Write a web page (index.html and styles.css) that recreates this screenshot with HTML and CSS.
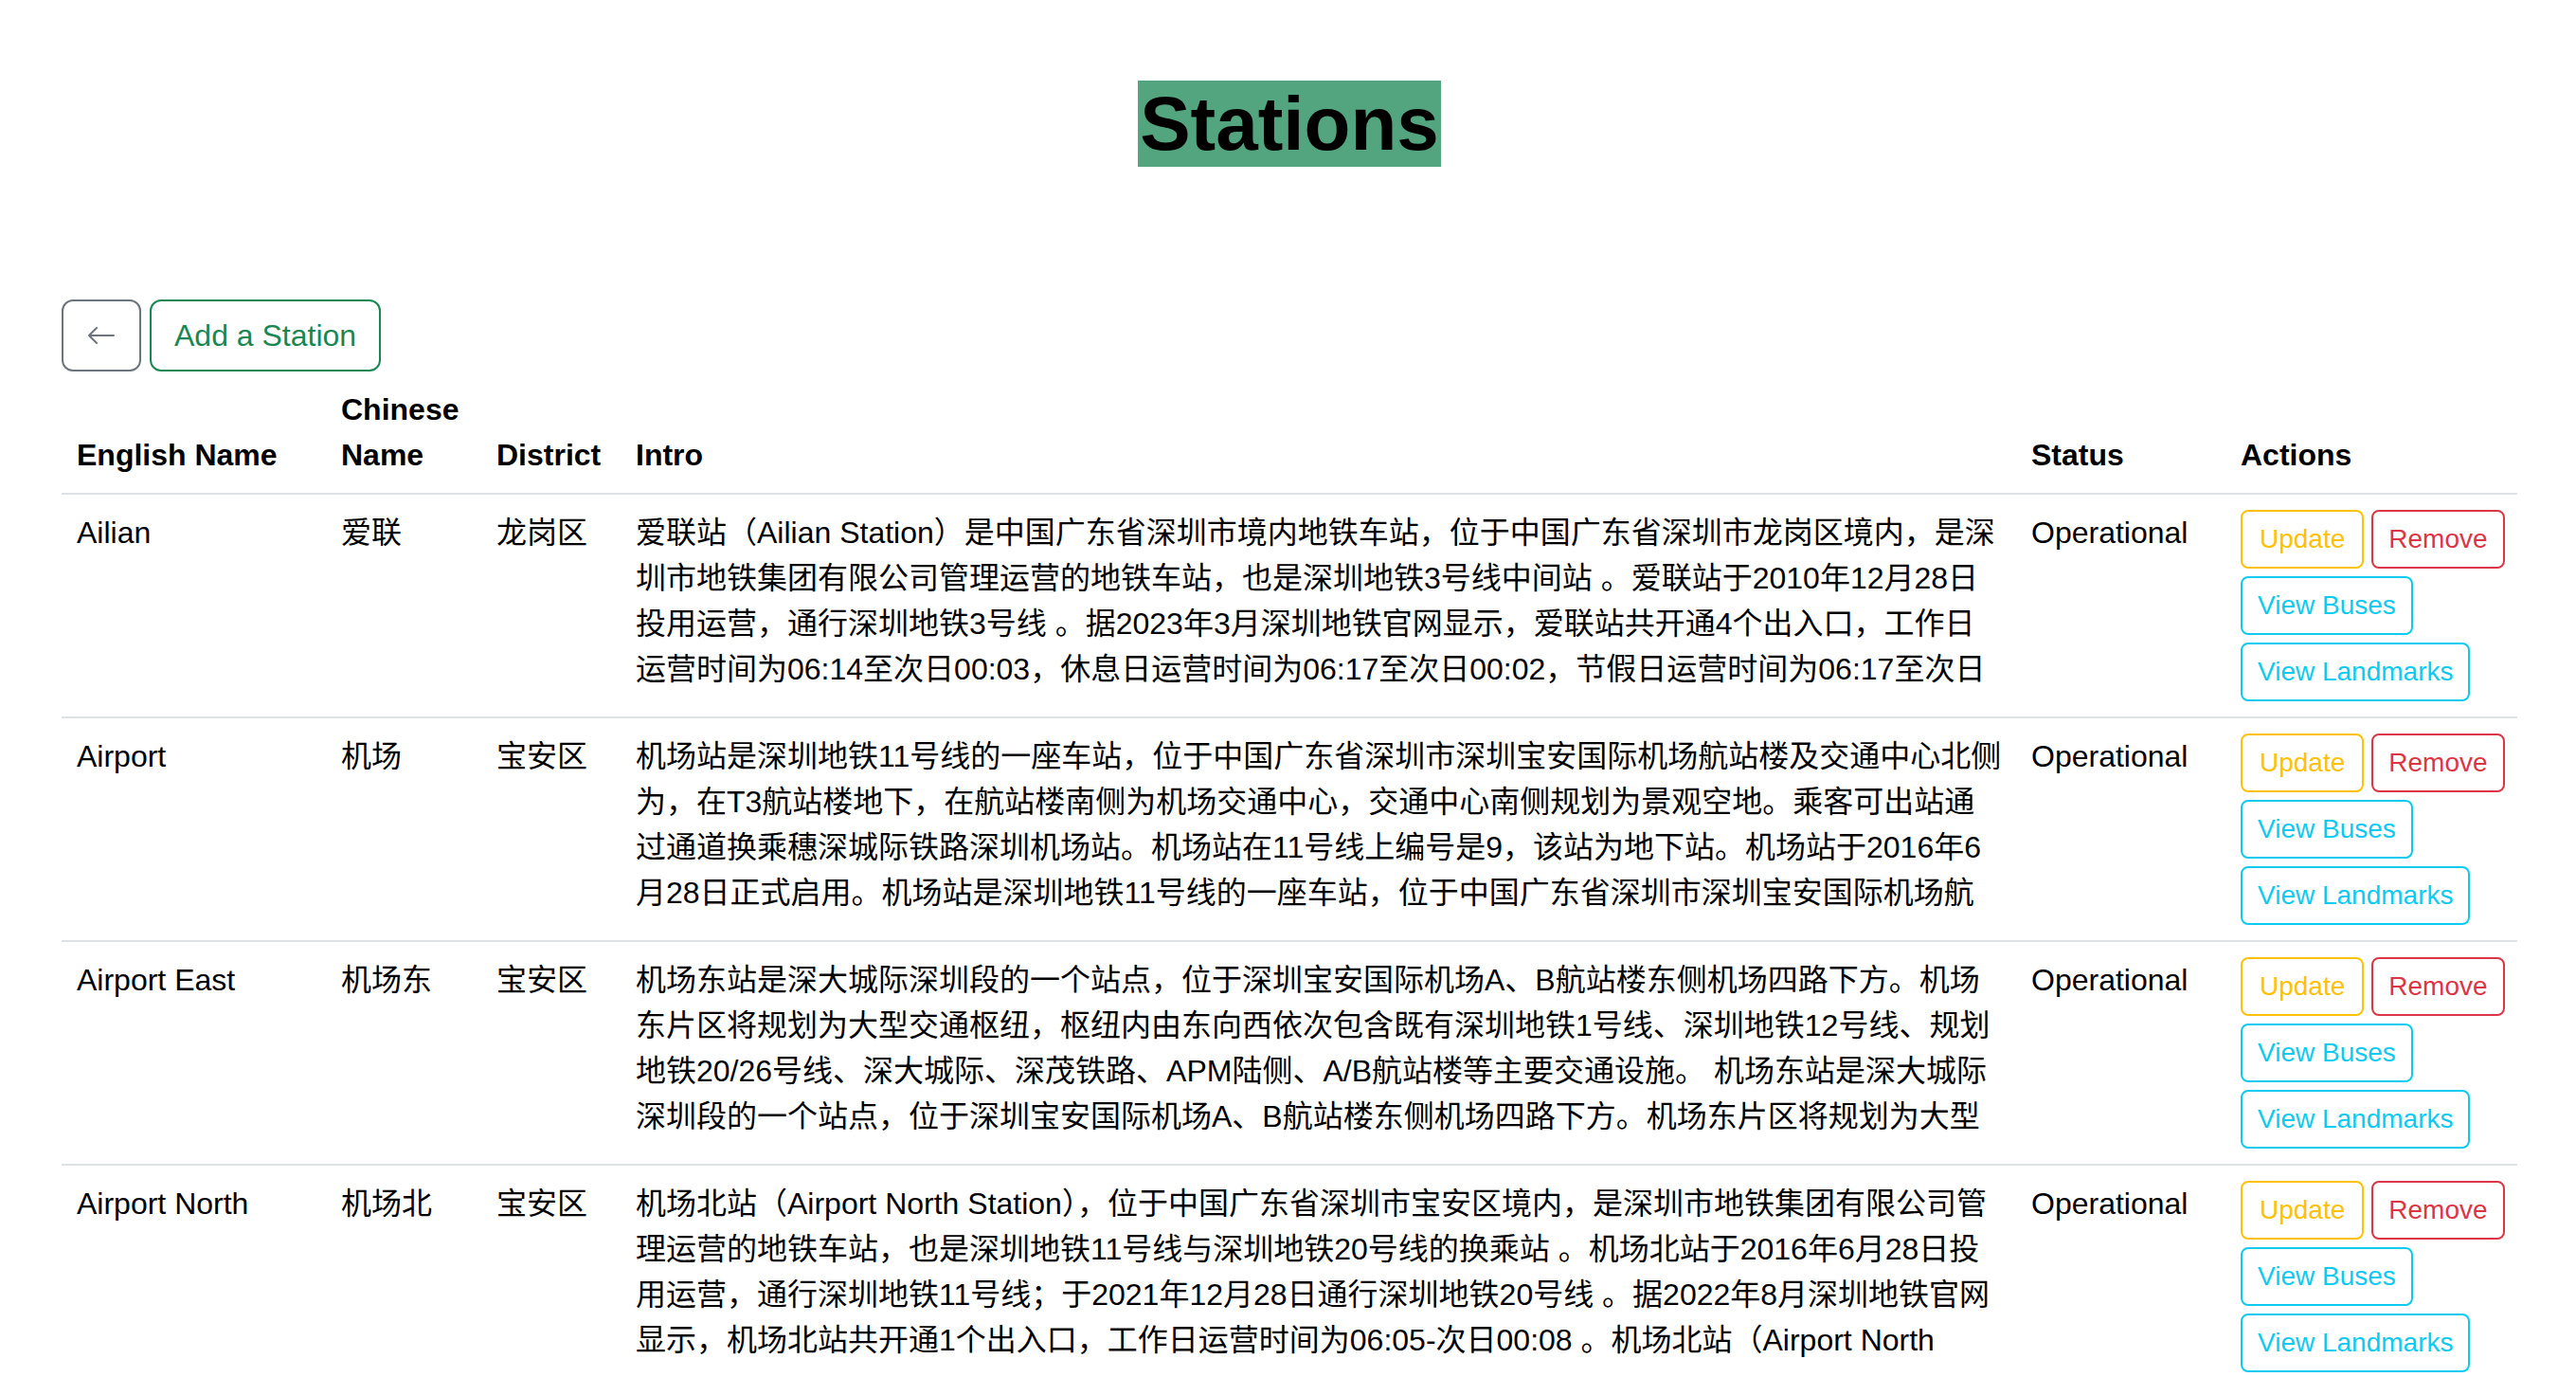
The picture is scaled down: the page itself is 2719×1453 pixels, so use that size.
FILE: index.html
```html
<!DOCTYPE html>
<html lang="en">
<head>
<meta charset="utf-8">
<title>Stations</title>
<link rel="stylesheet" href="styles.css">
</head>
<body>
<div class="page">
  <header class="page-head">
    <h1 class="title">Stations</h1>
  </header>

  <div class="toolbar">
    <a class="btn btn-back" href="#" aria-label="Back">
      <svg class="icon" viewBox="0 0 16 16" width="32" height="32" fill="currentColor" aria-hidden="true"><path fill-rule="evenodd" d="M15 8a.5.5 0 0 0-.5-.5H2.707l3.147-3.146a.5.5 0 1 0-.708-.708l-4 4a.5.5 0 0 0 0 .708l4 4a.5.5 0 0 0 .708-.708L2.707 8.5H14.5A.5.5 0 0 0 15 8z"/></svg>
    </a>
    <a class="btn btn-add" href="#">Add a Station</a>
  </div>

  <table class="stations">
    <colgroup>
      <col class="c-en"><col class="c-cn"><col class="c-dist"><col class="c-intro"><col class="c-status"><col class="c-actions">
    </colgroup>
    <thead>
      <tr>
        <th>English Name</th>
        <th>Chinese Name</th>
        <th>District</th>
        <th>Intro</th>
        <th>Status</th>
        <th>Actions</th>
      </tr>
    </thead>
    <tbody>
      <tr>
        <td>Ailian</td>
        <td>爱联</td>
        <td>龙岗区</td>
        <td><div class="intro">爱联站（Ailian Station）是中国广东省深圳市境内地铁车站，位于中国广东省深圳市龙岗区境内，是深<br>圳市地铁集团有限公司管理运营的地铁车站，也是深圳地铁3号线中间站 。爱联站于2010年12月28日<br>投用运营，通行深圳地铁3号线 。据2023年3月深圳地铁官网显示，爱联站共开通4个出入口，工作日<br>运营时间为06:14至次日00:03，休息日运营时间为06:17至次日00:02，节假日运营时间为06:17至次日</div></td>
        <td>Operational</td>
        <td>
          <div class="actions">
            <div class="pair"><a class="btn btn-sm btn-warn" href="#">Update</a><a class="btn btn-sm btn-danger" href="#">Remove</a></div>
            <a class="btn btn-sm btn-info" href="#">View Buses</a>
            <a class="btn btn-sm btn-info" href="#">View Landmarks</a>
          </div>
        </td>
      </tr>
      <tr>
        <td>Airport</td>
        <td>机场</td>
        <td>宝安区</td>
        <td><div class="intro">机场站是深圳地铁11号线的一座车站，位于中国广东省深圳市深圳宝安国际机场航站楼及交通中心北侧<br>为，在T3航站楼地下，在航站楼南侧为机场交通中心，交通中心南侧规划为景观空地。乘客可出站通<br>过通道换乘穗深城际铁路深圳机场站。机场站在11号线上编号是9，该站为地下站。机场站于2016年6<br>月28日正式启用。机场站是深圳地铁11号线的一座车站，位于中国广东省深圳市深圳宝安国际机场航</div></td>
        <td>Operational</td>
        <td>
          <div class="actions">
            <div class="pair"><a class="btn btn-sm btn-warn" href="#">Update</a><a class="btn btn-sm btn-danger" href="#">Remove</a></div>
            <a class="btn btn-sm btn-info" href="#">View Buses</a>
            <a class="btn btn-sm btn-info" href="#">View Landmarks</a>
          </div>
        </td>
      </tr>
      <tr>
        <td>Airport East</td>
        <td>机场东</td>
        <td>宝安区</td>
        <td><div class="intro">机场东站是深大城际深圳段的一个站点，位于深圳宝安国际机场A、B航站楼东侧机场四路下方。机场<br>东片区将规划为大型交通枢纽，枢纽内由东向西依次包含既有深圳地铁1号线、深圳地铁12号线、规划<br>地铁20/26号线、深大城际、深茂铁路、APM陆侧、A/B航站楼等主要交通设施。 机场东站是深大城际<br>深圳段的一个站点，位于深圳宝安国际机场A、B航站楼东侧机场四路下方。机场东片区将规划为大型</div></td>
        <td>Operational</td>
        <td>
          <div class="actions">
            <div class="pair"><a class="btn btn-sm btn-warn" href="#">Update</a><a class="btn btn-sm btn-danger" href="#">Remove</a></div>
            <a class="btn btn-sm btn-info" href="#">View Buses</a>
            <a class="btn btn-sm btn-info" href="#">View Landmarks</a>
          </div>
        </td>
      </tr>
      <tr>
        <td>Airport North</td>
        <td>机场北</td>
        <td>宝安区</td>
        <td><div class="intro">机场北站（Airport North Station），位于中国广东省深圳市宝安区境内，是深圳市地铁集团有限公司管<br>理运营的地铁车站，也是深圳地铁11号线与深圳地铁20号线的换乘站 。机场北站于2016年6月28日投<br>用运营，通行深圳地铁11号线；于2021年12月28日通行深圳地铁20号线 。据2022年8月深圳地铁官网<br>显示，机场北站共开通1个出入口，工作日运营时间为06:05-次日00:08 。机场北站（Airport North</div></td>
        <td>Operational</td>
        <td>
          <div class="actions">
            <div class="pair"><a class="btn btn-sm btn-warn" href="#">Update</a><a class="btn btn-sm btn-danger" href="#">Remove</a></div>
            <a class="btn btn-sm btn-info" href="#">View Buses</a>
            <a class="btn btn-sm btn-info" href="#">View Landmarks</a>
          </div>
        </td>
      </tr>
    </tbody>
  </table>
</div>
</body>
</html>
```

FILE: styles.css
```css
html, body {
  margin: 0;
  padding: 0;
  background: #ffffff;
}

body {
  font-family: "Liberation Sans", "Noto Sans CJK SC", Arial, sans-serif;
  font-size: 32px;
  line-height: 1.5;
  color: #212529;
}

.page {
  padding: 0 62px 0 65px;
}

.page-head {
  text-align: center;
  padding-top: 85px;
}

.title {
  display: inline-block;
  margin: 0;
  padding: 0 2px;
  font-family: "Liberation Sans", Arial, sans-serif;
  font-size: 80px;
  font-weight: 700;
  line-height: 91px;
  color: #000;
  background: rgba(25, 135, 84, 0.75);
  vertical-align: top;
}

.toolbar {
  display: flex;
  gap: 9px;
  margin-top: 140px;
}

.btn {
  display: inline-flex;
  align-items: center;
  justify-content: center;
  box-sizing: border-box;
  border: 2px solid currentColor;
  border-radius: 12px;
  padding: 12px 24px;
  font-size: 32px;
  line-height: 48px;
  text-decoration: none;
  background: #fff;
  white-space: nowrap;
}

.btn-back {
  color: #6c757d;
  border-color: #6c757d;
}

.btn-back .icon {
  display: block;
  width: 32px;
  height: 32px;
  margin: 8px 0;
}

.btn-add {
  color: #198754;
  border-color: #198754;
}

.stations {
  width: 100%;
  border-collapse: collapse;
  table-layout: fixed;
}

.c-en { width: 279px; }
.c-cn { width: 164px; }
.c-dist { width: 147px; }
.c-intro { width: 1473px; }
.c-status { width: 221px; }
.c-actions { width: 308px; }

.stations th,
.stations td {
  padding: 16px;
  text-align: left;
  border-bottom: 2px solid #dee2e6;
}

.stations thead th {
  vertical-align: bottom;
  font-weight: 700;
  color: #000;
}

.stations tbody td {
  vertical-align: top;
  color: #000;
}

.intro {
  white-space: nowrap;
}

.actions {
  display: flex;
  flex-direction: column;
  align-items: flex-start;
  gap: 8px;
}

.pair {
  display: flex;
  gap: 8px;
}

.btn-sm {
  font-size: 28px;
  line-height: 42px;
  padding: 8px 16px;
  border-radius: 8px;
}

.btn-warn {
  color: #ffc107;
  border-color: #ffc107;
  padding: 8px 18px;
}

.btn-danger {
  color: #dc3545;
  border-color: #dc3545;
}

.btn-info {
  color: #0dcaf0;
  border-color: #0dcaf0;
}
```
